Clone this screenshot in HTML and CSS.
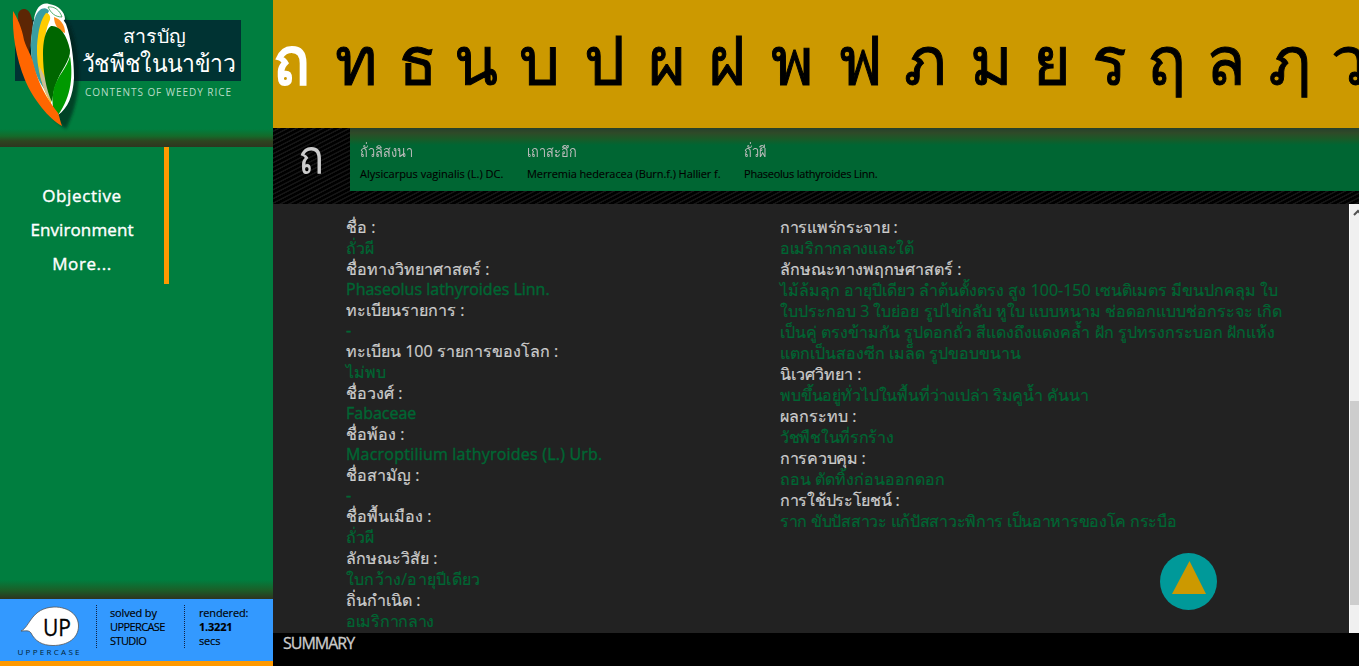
FILE: index.html
```html
<!DOCTYPE html>
<html lang="th">
<head>
<meta charset="utf-8">
<title>สารบัญวัชพืชในนาข้าว</title>
<link rel="stylesheet" href="styles.css">
</head>
<body>
<div class="app">
<aside class="sidebar">
  <header class="brand">
    <svg class="logo" width="273" height="147" viewBox="0 0 273 147">
      <defs><filter id="soft" x="-20%" y="-20%" width="140%" height="140%"><feGaussianBlur stdDeviation="1.5"/></filter></defs>
      <rect x="15" y="20" width="226" height="61" fill="#033"/>
      <path d="M50 6C64 10 72 25 76 46C82 79 78 104 66 129C49 118 25 83 18 45Z" fill="#001a12" opacity=".6" filter="url(#soft)"/>
      <path d="M36 15C44 6 60 12 66 24C71 38 74 58 74 78C73 96 68 108 58 115C46 104 33 80 31 50C30 36 32 24 36 15Z" fill="#fff"/>
      <path d="M18 14C20 7 29 7 31 16C35 25 31 36 29 54C23 44 18 30 18 14Z" fill="#5c2605"/>
      <path d="M34 19C36 7 42 2 49 4C58 5 65 12 65 19C64 22 60 22 57 20C50 14 43 12 34 19Z" fill="#fff"/>
      <path d="M48 7C55 6 60 11 62 17C55 17 51 13 48 7Z" fill="none" stroke="#279a48" stroke-width=".8"/>
      <path d="M35 18C38 8 46 6 49 11C42 22 38 42 40 60C42 72 45 82 48 94C38 82 31 66 31 48C31 36 32 26 35 18Z" fill="#399da1"/>
      <path d="M46 13C49 13 52 17 49 22C44 34 43 52 46 70C49 84 52 92 51 104C43 90 36 68 37 46C38 30 41 19 46 13Z" fill="#fc0"/>
      <path d="M39 66C45 76 50 88 51 102C44 92 40 78 39 66Z" fill="#cbbd9a"/>
      <path d="M54 17C60 19 65 24 65 33C58 31 54 24 54 17Z" fill="#ff8c19"/>
      <path d="M51 26C59 25 67 34 70 50C71 60 60 71 56 84C53 91 53 98 52 102C46 90 43 72 43 54C43 42 45 30 51 26Z" fill="#060"/>
      <path d="M70 56C73 74 72 96 58 115C51 111 52 98 54 88C58 75 67 68 70 56Z" fill="#090"/>
      <path d="M13 11C17 17 22 28 24 40C27 50 32 55 34 66C38 82 46 98 58 113C60 118 60 121 62 126C49 119 33 99 25 80C16 58 12 34 13 11Z" fill="#f60"/>
      <g class="logo-thai" text-anchor="middle">
        <text x="154" y="43" font-size="19" textLength="63" lengthAdjust="spacingAndGlyphs">สารบัญ</text>
        <text x="158.500" y="72" font-size="24" textLength="153" lengthAdjust="spacingAndGlyphs">วัชพืชในนาข้าว</text>
      </g>
      <text class="logo-sub" x="85" y="95.500" textLength="146">CONTENTS OF WEEDY RICE</text>
    </svg>
  </header>
  <nav class="menu"><a class="m1">Objective</a><a>Environment</a><a class="m3">More...</a></nav>
  <footer class="credits">
    <svg class="up" width="96" height="62" viewBox="0 0 96 62">
      <path d="M21 32C30 28 31 9 54 8C69 8 78.500 16 78.500 27C78.500 39 68 46.500 53 46.500C42 46.500 35 42 31 34C29 31 26 32 21 32Z" fill="#fff" stroke="#555" stroke-width=".8"/>
      <text class="up-big" x="43" y="37" textLength="28" lengthAdjust="spacingAndGlyphs">UP</text>
      <text class="up-small" x="17.500" y="56" textLength="62">UPPERCASE</text>
    </svg>
    <p class="credit solved">solved by<br><span class="caps">UPPERCASE<br>STUDIO</span></p>
    <p class="credit rendered">rendered:<br><b>1.3221</b><br>secs</p>
  </footer>
</aside>
<main class="main">
  <nav class="letters"><a class="on">ถ</a><a>ท</a><a>ธ</a><a>น</a><a>บ</a><a>ป</a><a>ผ</a><a>ฝ</a><a>พ</a><a>ฟ</a><a>ภ</a><a>ม</a><a>ย</a><a>ร</a><a>ฤ</a><a>ล</a><a>ฦ</a><a>ว</a></nav>
  <section class="index">
    <div class="current"><span>ถ</span></div>
    <div class="species">
      <a class="sp1"><span class="th">ถั่วลิสงนา</span><span class="la">Alysicarpus vaginalis (L.) DC.</span></a>
      <a class="sp2"><span class="th">เถาสะอึก</span><span class="la">Merremia hederacea (Burn.f.) Hallier f.</span></a>
      <a class="sp3"><span class="th">ถั่วผี</span><span class="la">Phaseolus lathyroides Linn.</span></a>
    </div>
  </section>
  <section class="detail">
    <dl class="left">
      <dt>ชื่อ :</dt><dd>ถั่วผี</dd>
      <dt>ชื่อทางวิทยาศาสตร์ :</dt><dd class="latin">Phaseolus lathyroides Linn.</dd>
      <dt>ทะเบียนรายการ :</dt><dd class="latin">-</dd>
      <dt>ทะเบียน 100 รายการของโลก :</dt><dd>ไม่พบ</dd>
      <dt>ชื่อวงศ์ :</dt><dd class="latin">Fabaceae</dd>
      <dt>ชื่อพ้อง :</dt><dd class="latin wide">Macroptilium lathyroides (L.) Urb.</dd>
      <dt>ชื่อสามัญ :</dt><dd class="latin">-</dd>
      <dt>ชื่อพื้นเมือง :</dt><dd>ถั่วผี</dd>
      <dt>ลักษณะวิสัย :</dt><dd class="wide">ใบกว้าง/อายุปีเดียว</dd>
      <dt>ถิ่นกำเนิด :</dt><dd class="tight">อเมริกากลาง</dd>
    </dl>
    <dl class="right">
      <dt class="tight">การแพร่กระจาย :</dt><dd class="tight">อเมริกากลางและใต้</dd>
      <dt>ลักษณะทางพฤกษศาสตร์ :</dt><dd>ไม้ล้มลุก อายุปีเดียว ลำต้นตั้งตรง สูง 100-150 เซนติเมตร มีขนปกคลุม ใบ<br>ใบประกอบ 3 ใบย่อย รูปไข่กลับ หูใบ แบบหนาม ช่อดอกแบบช่อกระจะ เกิด<br>เป็นคู่ ตรงข้ามกัน รูปดอกถั่ว สีแดงถึงแดงคล้ำ ฝัก รูปทรงกระบอก ฝักแห้ง<br>แตกเป็นสองซีก เมล็ด รูปขอบขนาน</dd>
      <dt>นิเวศวิทยา :</dt><dd class="snug">พบขึ้นอยู่ทั่วไปในพื้นที่ว่างเปล่า ริมคูน้ำ คันนา</dd>
      <dt>ผลกระทบ :</dt><dd class="tight">วัชพืชในที่รกร้าง</dd>
      <dt class="tight">การควบคุม :</dt><dd>ถอน ตัดทิ้งก่อนออกดอก</dd>
      <dt class="tight">การใช้ประโยชน์ :</dt><dd class="tight">ราก ขับปัสสาวะ แก้ปัสสาวะพิการ เป็นอาหารของโค กระบือ</dd>
    </dl>
    <svg class="totop" width="58" height="58" viewBox="0 0 58 58"><circle cx="28.500" cy="28.500" r="28.500" fill="#099"/><path d="M29.500 8L46 41H12Z" fill="#c90"/></svg>
    <div class="scroll"><svg width="9" height="14" viewBox="0 0 9 14"><path d="M4 11L8 7L12 11" fill="none" stroke="#505050" stroke-width="2"/></svg><div class="thumb"></div></div>
  </section>
  <footer class="summary">SUMMARY</footer>
</main>
</div>
</body>
</html>
```
FILE: styles.css
```css
* { box-sizing: border-box; }
body { margin: 0; background: #000; font-family: "Trebuchet MS", "Open Sans", "Noto Sans", sans-serif; }
.app { display: flex; width: 1359px; height: 666px; overflow: hidden; }
.sidebar { width: 273px; display: flex; flex-direction: column; background: linear-gradient(#007e3f 0 580px, #1b5f28 590px, #2d3520 599px); }
.brand { height: 147px; background: linear-gradient(#007e3f 0 129px, #146b2a 136px, #2d4520 141px, #2f3520 147px); }
.logo { display: block; }
.logo-thai { fill: #fff; }
.logo-sub { font: 10px "Open Sans", sans-serif; fill: #b8dcc8; }
.menu { width: 169px; height: 137px; padding: 32px 0 0 0; border-right: 5px solid #f90; display: flex; flex-direction: column; text-align: center; }
.menu a { height: 34px; line-height: 34px; color: #fff; font-size: 17px; letter-spacing: .1px; -webkit-text-stroke: .4px #fff; }
.menu .m1, .menu .m3 { letter-spacing: .6px; }
.credits { margin-top: auto; height: 67px; background: #39f; border-bottom: 5px solid #f90; display: flex; }
.up { flex: none; }
.up-big { font-size: 24px; stroke: #000; stroke-width: .3px; }
.up-small { font-size: 8px; fill: #023; }
.credit { margin: 6px 0 0; height: 43px; border-left: 1px dotted #124; font-size: 11px; line-height: 14px; color: #000; padding-top: 1px; }
.credit { letter-spacing: -.15px; -webkit-text-stroke: .15px #000; }
.credit b { letter-spacing: -.2px; }
.caps { letter-spacing: -.6px; }
.solved { width: 88px; padding-left: 13px; }
.rendered { padding-left: 14px; }
.main { flex: 1; min-width: 0; display: flex; flex-direction: column; }
.letters { height: 128px; background: #c90; display: flex; font-size: 68px; line-height: 118px; overflow: hidden; white-space: nowrap; -webkit-text-stroke: 1px #000; }
.letters a { flex: none; width: 63px; transform: scaleX(.95); transform-origin: 0 0; }
.letters .on { color: #fff; font-weight: 700; width: 62px; transform: scaleX(.9); -webkit-text-stroke: 0; }
.letters a:nth-child(3) { width: 56px; }
.letters a:nth-child(4), .letters a:nth-child(5) { width: 65px; }
.letters a:nth-child(6) { width: 64px; }
.letters a:nth-child(7) { width: 60px; }
.letters a:nth-child(8) { width: 63px; }
.letters a:nth-child(9) { width: 66px; }
.letters a:nth-child(10) { width: 67px; }
.letters a:nth-child(11) { width: 66px; }
.letters a:nth-child(13) { width: 59px; }
.letters a:nth-child(14) { width: 55px; }
.letters a:nth-child(15) { width: 59px; }
.letters a:nth-child(16) { width: 62px; }
.index { height: 76px; display: flex; background: repeating-linear-gradient(153deg, #000 0 2px, #151515 2.500px 3.500px, #000 4px); }
.current { width: 77px; text-align: center; color: #ccc; font-size: 48px; line-height: 55px; }
.current span { display: inline-block; transform: scaleX(.9); }
.species { flex: 1; height: 63px; display: flex; background: linear-gradient(#26402c 0, #2f4a28 5px, #1a5a28 11px, #063 17px); padding: 14px 0 0 10px; }
.species a { display: flex; flex-direction: column; flex: none; }
.sp1 { width: 167px; } .sp2 { width: 217px; }
.th { height: 22px; line-height: 20px; font-size: 14.500px; color: #bbb; transform: scaleX(.88); transform-origin: 0 0; }
.la { height: 20px; line-height: 20px; font-size: 11px; color: #000; white-space: nowrap; -webkit-text-stroke: .1px #000; }
.sp2 .la { letter-spacing: -.08px; }
.sp3 .la { letter-spacing: -.24px; }
.detail { position: relative; height: 429px; overflow: hidden; background: #222; display: flex; padding: 13px 0 0 73px; }
dl, dd { margin: 0; }
dl { font-size: 16px; line-height: 21px; white-space: nowrap; -webkit-text-stroke-width: .2px; }
dt { color: #ccc; } dd { color: #063; }
.latin { height: 20px; line-height: 19px; -webkit-text-stroke-width: .4px; }
.wide { letter-spacing: .22px; }
.tight { letter-spacing: -.29px; }
.snug { letter-spacing: -.15px; }
.left { width: 434px; }
.totop { position: absolute; left: 887px; top: 349px; }
.scroll { position: absolute; right: 0; top: 0; width: 10px; height: 429px; background: #f0f0f0; border-left: 1px solid #fff; }
.scroll svg { display: block; }
.thumb { position: absolute; top: 197px; left: 0; width: 9px; height: 204px; background: #cdcdcd; }
.summary { flex: 1; padding-left: 10px; color: #ccc; font-size: 16px; line-height: 21px; letter-spacing: -1px; -webkit-text-stroke: .3px #ccc; }
```
